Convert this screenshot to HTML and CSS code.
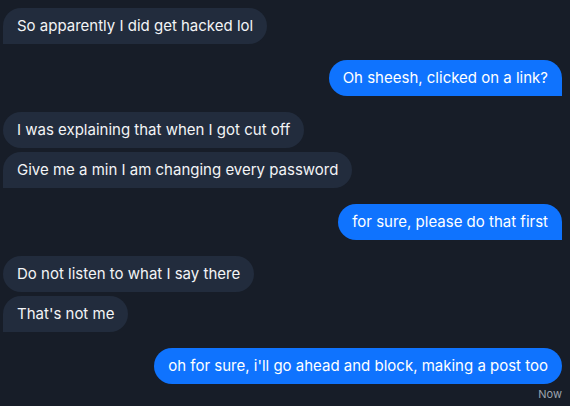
FILE: index.html
```html
<!DOCTYPE html>
<html>
<head>
<meta charset="utf-8">
<link rel="stylesheet" href="styles.css">
</head>
<body>
<div class="chat">
  <div class="group in">
    <div class="bubble">So apparently I did get hacked lol</div>
  </div>
  <div class="group out">
    <div class="bubble">Oh sheesh, clicked on a link?</div>
  </div>
  <div class="group in">
    <div class="bubble">I was explaining that when I got cut off</div>
    <div class="bubble">Give me a min I am changing every password</div>
  </div>
  <div class="group out">
    <div class="bubble">for sure, please do that first</div>
  </div>
  <div class="group in">
    <div class="bubble">Do not listen to what I say there</div>
    <div class="bubble">That's not me</div>
  </div>
  <div class="group out">
    <div class="bubble">oh for sure, i'll go ahead and block, making a post too</div>
    <div class="time">Now</div>
  </div>
</div>
</body>
</html>
```
FILE: styles.css
```css
html, body {
  margin: 0;
  padding: 0;
  background: #171d28;
  height: 100%;
}
body {
  font-family: "Inter", "Liberation Sans", sans-serif;
  color: #f3f4f6;
}
.chat {
  display: flex;
  flex-direction: column;
  gap: 16px;
  padding: 8px 8px 0 3px;
}
.group {
  display: flex;
  flex-direction: column;
  gap: 4px;
}
.group.in { align-items: flex-start; }
.group.out { align-items: flex-end; }
.bubble {
  font-size: 15px;
  line-height: 20px;
  padding: 8px 14px;
  border-radius: 18px;
  white-space: nowrap;
}
.in .bubble {
  background: #222c3d;
}
.in .bubble:last-of-type {
  border-bottom-left-radius: 0;
}
.out .bubble {
  background: #0f73fe;
  color: #ffffff;
}
.out .bubble:last-of-type {
  border-bottom-right-radius: 0;
}
.time {
  font-size: 11px;
  line-height: 14px;
  color: #9ca3af;
  margin-top: -1px;
}
```
